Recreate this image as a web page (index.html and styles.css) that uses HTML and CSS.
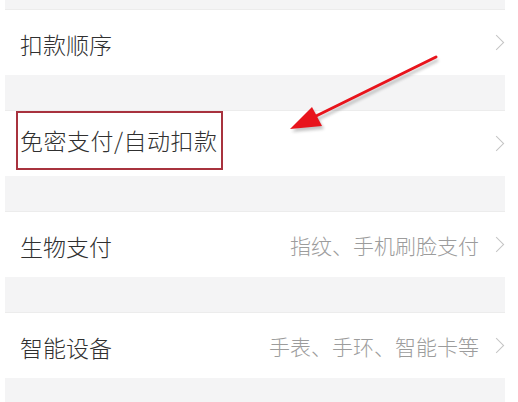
FILE: index.html
```html
<!DOCTYPE html>
<html lang="zh-CN">
<head>
  <meta charset="UTF-8" />
  <meta name="viewport" content="width=device-width, initial-scale=1.0"/>
  <title>支付设置</title>
  <link rel="stylesheet" href="styles.css">
</head>
<body>

  <div class="settings">
    <div class="row">
      <span class="label">扣款顺序</span>
      <span class="chevron"></span>
    </div>

    <div class="row">
      <span class="label boxed">免密支付/自动扣款</span>
      <span class="chevron"></span>
    </div>

    <div class="row">
      <span class="label">生物支付</span>
      <span class="hint">指纹、手机刷脸支付</span>
      <span class="chevron"></span>
    </div>

    <div class="row">
      <span class="label">智能设备</span>
      <span class="hint">手表、手环、智能卡等</span>
      <span class="chevron"></span>
    </div>
  </div>

  <!-- annotation arrow drawn over the list -->
  <svg class="arrow" width="518" height="402" viewBox="0 0 518 402">
    <defs>
      <filter id="blur"><feGaussianBlur stdDeviation="1.5"/></filter>
    </defs>
    <g opacity="0.35" filter="url(#blur)" transform="translate(2,3)">
      <line x1="436" y1="57" x2="312" y2="118" stroke="#555" stroke-width="3"/>
      <polygon points="290,129 312,107 322,126" fill="#555"/>
    </g>
    <line x1="436" y1="57" x2="312" y2="118" stroke="#e8141c" stroke-width="3" stroke-linecap="round"/>
    <polygon points="290,129 312,107 322,126" fill="#e8141c"/>
  </svg>

</body>
</html>
```

FILE: styles.css
```css
html, body {
  margin: 0;
  padding: 0;
  height: 100%;
  overflow: hidden;
  background: #fff;
  font-family: "Noto Sans CJK SC", "Noto Sans", sans-serif;
}

.settings {
  margin: 0 13px 0 5px;
  padding-top: 9px;
  background: #f4f4f5;
  display: flex;
  flex-direction: column;
  gap: 35px;
  height: 402px;
  box-sizing: border-box;
}

.row {
  height: 66px;
  background: #fff;
  border-top: 1px solid #ececec;
  box-sizing: border-box;
  display: flex;
  align-items: center;
  padding: 0 0 0 15px;
}

.label {
  font-size: 23px;
  font-weight: 300;
  color: #303030;
  flex: 1;
  white-space: nowrap;
  margin-top: 2px;
}

.boxed {
  flex: 0 0 auto;
  margin: 0 auto 6px -4px;
  padding: 10px 0 10px 2px;
  width: 201px;
  line-height: 35px;
  border: 2px solid #a8323e;
  letter-spacing: 0.5px;
}

.hint {
  font-size: 21px;
  font-weight: 300;
  color: #9c9c9c;
  margin-right: 12px;
  white-space: nowrap;
}

.chevron {
  width: 10px;
  height: 10px;
  border-top: 1.5px solid #c4c4c4;
  border-right: 1.5px solid #c4c4c4;
  transform: rotate(45deg);
  margin-right: 3px;
}

.arrow {
  position: absolute;
  top: 0;
  left: 0;
  pointer-events: none;
}
```
